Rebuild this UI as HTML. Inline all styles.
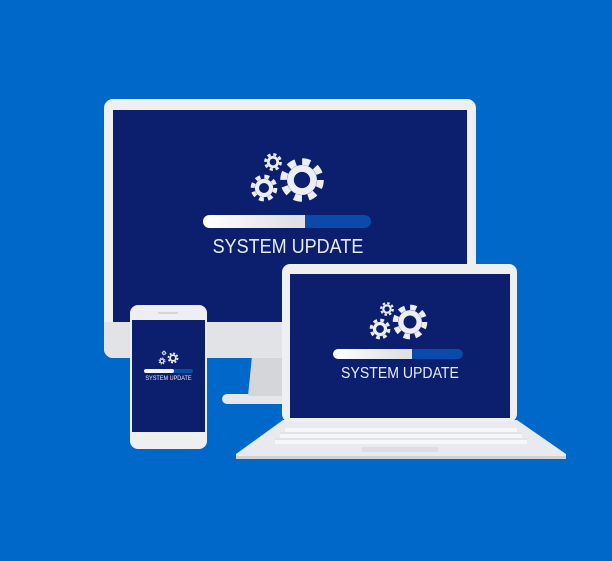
<!DOCTYPE html>
<html><head><style>
html,body{margin:0;padding:0;width:612px;height:561px;overflow:hidden;background:#0068c8;font-family:"Liberation Sans",sans-serif}
.abs{position:absolute}
.txt{position:absolute;color:#e8ecf4;text-align:center;white-space:nowrap;transform-origin:center top}
</style></head><body>
<svg class="abs" style="left:0;top:0" width="612" height="561">
<defs>
<g id="gear">
<circle r="0.68" fill="#eceef2"/>
<circle r="0.84" fill="none" stroke="#eceef2" stroke-width="0.3" stroke-dasharray="0.36 0.2997"/>
<circle r="0.37" fill="#0c1f6e"/>
</g>
<linearGradient id="bar" x1="0" x2="1"><stop offset="0" stop-color="#fff"/><stop offset="1" stop-color="#dcdde2"/></linearGradient>
</defs>
<!-- monitor -->
<rect x="222" y="394" width="80" height="10" rx="5" fill="#e6e7ea"/>
<polygon points="252,356 284,356 288,396 248,396" fill="#d4d6da"/>
<rect x="104" y="99" width="372" height="259" rx="9" fill="#eeeff1"/>
<rect x="104" y="322" width="372" height="36" rx="9" fill="#e2e3e6"/>
<rect x="104" y="322" width="372" height="10" fill="#e2e3e6"/>
<rect x="113" y="110" width="354" height="212" fill="#0c1f6e"/>
<use href="#gear" transform="translate(302,180) scale(22)"/>
<use href="#gear" transform="translate(264,188) scale(13.5)"/>
<use href="#gear" transform="translate(273,162) scale(9)"/>
<rect x="203" y="215" width="168" height="13" rx="6.5" fill="#0a4aa8"/>
<rect x="203" y="215" width="102" height="13" rx="6.5" fill="url(#bar)"/>
<rect x="295" y="215" width="10" height="13" fill="#e0e1e5"/>
<!-- phone -->
<rect x="130" y="305" width="77" height="144" rx="8" fill="#eeeff1"/>
<rect x="132" y="320" width="73" height="112" fill="#0c1f6e"/>
<rect x="158" y="312" width="20" height="2" rx="1" fill="#d4d6da"/>
<use href="#gear" transform="translate(173,358) scale(5.5)"/>
<use href="#gear" transform="translate(162,361) scale(3.5)"/>
<use href="#gear" transform="translate(164,353) scale(2.4)"/>
<rect x="144" y="369" width="49" height="4" rx="2" fill="#0a4aa8"/>
<rect x="144" y="369" width="30" height="4" rx="2" fill="#f2f2f4"/>
<!-- laptop -->
<polygon points="283,420 517,420 566,454 566,459 236,459 236,454" fill="#e9eaed"/>
<polygon points="236,456 566,456 566,459 236,459" fill="#d0d2d6"/>
<g fill="#f7f7f9">
<rect x="285" y="428" width="232" height="4" rx="1"/>
<rect x="280" y="434" width="242" height="4" rx="1"/>
<rect x="275" y="440" width="252" height="4" rx="1"/>
</g>
<g stroke="#dadce0" stroke-width="1">
<line x1="280" y1="433" x2="522" y2="433"/><line x1="275" y1="439" x2="527" y2="439"/>
</g>
<rect x="362" y="447" width="76" height="5" rx="1" fill="#dcdee2"/>
<rect x="282" y="264" width="235" height="158" rx="8" fill="#eeeff1"/>
<rect x="290" y="274" width="220" height="144" fill="#0c1f6e"/>
<use href="#gear" transform="translate(410,322) scale(17.5)"/>
<use href="#gear" transform="translate(380,329) scale(10.5)"/>
<use href="#gear" transform="translate(387,309) scale(7)"/>
<rect x="333" y="349" width="130" height="10" rx="5" fill="#0a4aa8"/>
<rect x="333" y="349" width="79" height="10" rx="5" fill="url(#bar)"/>
<rect x="404" y="349" width="8" height="10" fill="#e0e1e5"/>
</svg>
<div class="txt" style="left:168px;width:240px;top:236px;font-size:20px;transform:scaleX(0.9)">SYSTEM UPDATE</div>
<div class="txt" style="left:300px;width:200px;top:365px;font-size:16px;transform:scaleX(0.88)">SYSTEM UPDATE</div>
<div class="txt" style="left:130px;width:77px;top:375px;font-size:6.5px;transform:scaleX(0.85)">SYSTEM UPDATE</div>
</body></html>
